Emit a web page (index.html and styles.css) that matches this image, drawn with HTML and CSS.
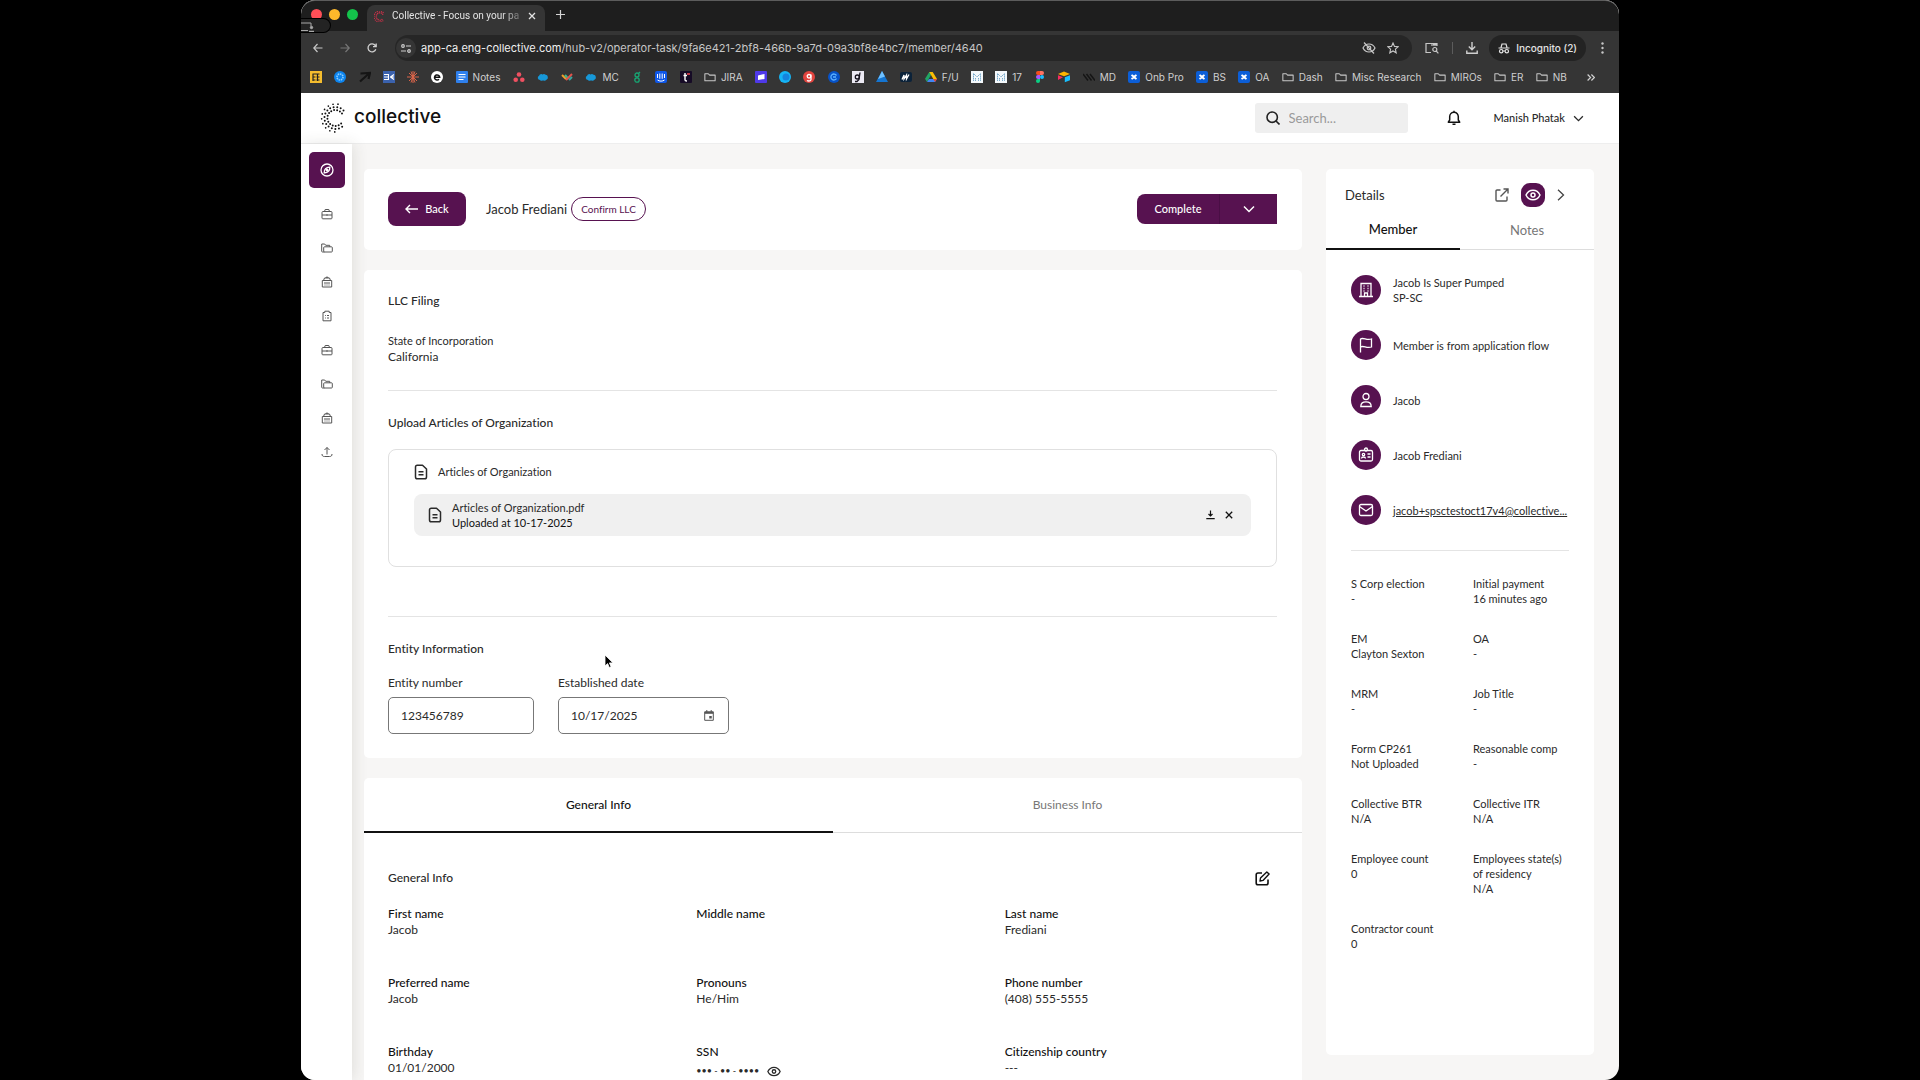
FILE: index.html
```html
<!DOCTYPE html>
<html lang="en">
<head>
  <meta charset="UTF-8" />
  <meta name="viewport" content="width=device-width, initial-scale=1.0"/>
  <title>Collective - Focus on your passion</title>
  <link rel="stylesheet" href="styles.css">
</head>
<body>
  <!-- shared icons -->
  <svg class="sprite" aria-hidden="true">
    <symbol id="i-folder" viewBox="0 0 14 12"><path d="M1 2.2h4l1.5 1.6H13v6.6H1z" fill="none" stroke="#c7c7c7" stroke-width="1.2" stroke-linejoin="round"/></symbol>
    <symbol id="i-cross" viewBox="0 0 12 12"><rect width="12" height="12" rx="2" fill="#0b5ed7"/><path d="M3.5 4c2 1.200 3 2.800 5 4M8.500 4c-2 1.200-3 2.800-5 4" stroke="#fff" stroke-width="2" fill="none"/></symbol>
    <symbol id="i-cloud" viewBox="0 0 14 12"><path d="M3.500 9.500a2.600 2.600 0 0 1-1-5A2.600 2.600 0 0 1 6.500 3a3 3 0 0 1 3.500.5 3 3 0 0 1 1 5.700 3 3 0 0 1-4 .6 2.500 2.500 0 0 1-3.500-.3z" fill="#1798d8"/></symbol>
    <symbol id="i-m" viewBox="0 0 12 12"><rect width="12" height="12" fill="#f4f8fb"/><path d="M2.500 10V2.500L6 6l3.500-3.500V10M4.500 10V7M7.500 10V7" stroke="#79aacb" stroke-width="1" stroke-dasharray="1.500 .5" fill="none"/></symbol>
    <symbol id="i-case" viewBox="0 0 12 12"><path d="M1 4.500A1 1 0 0 1 2 3.500h8a1 1 0 0 1 1 1V10a.8.8 0 0 1-.8.800H1.800A.8.8 0 0 1 1 10zM3.500 3.500 4.200 1.500h3.600l.7 2M1 7h10M6 6.200v1.600"/></symbol>
    <symbol id="i-folders" viewBox="0 0 12 12"><path d="M3.500 10H1.500a.8.8 0 0 1-.8-.8V2h3l1 1.300h4V4.800M3.500 10a.8.8 0 0 1-.8-.8V5.600a.8.8 0 0 1 .8-.8h7a.8.8 0 0 1 .8.800v3.600a.8.8 0 0 1-.8.800z"/></symbol>
    <symbol id="i-bank" viewBox="0 0 12 12"><path d="M1.300 4.500h9.400V11H1.300zM2.500 4.500 3.500 2h5l1 2.500M5 2v-.8h2V2M3 7h6M3.500 9h1M5.500 9h1M7.500 9h1"/></symbol>
    <symbol id="i-doc" viewBox="0 0 14 16"><path d="M1.500 3A1.800 1.800 0 0 1 3.300 1.200H8.500L12.500 5v8a1.800 1.800 0 0 1-1.800 1.800H3.300A1.800 1.800 0 0 1 1.500 13zM4.500 7.800h5M4.500 10.800h5" fill="none" stroke="currentColor" stroke-width="1.500" stroke-linejoin="round"/></symbol>
    <symbol id="i-eye" viewBox="0 0 16 12"><path d="M1 6c1.400-3 4-4.800 7-4.800S13.600 3 15 6c-1.400 3-4 4.800-7 4.800S2.400 9 1 6z" fill="none" stroke="currentColor" stroke-width="1.500" stroke-linejoin="round"/><circle cx="8" cy="6" r="2" fill="none" stroke="currentColor" stroke-width="1.500"/></symbol>
    <symbol id="i-down" viewBox="0 0 12 8"><path d="M1 1.500l5 5 5-5" fill="none" stroke="currentColor" stroke-width="1.500"/></symbol>
  </svg>

  <div class="window">
    <div class="tab-strip">
      <div class="lights"><i class="light red"></i><i class="light yellow"></i><i class="light green"></i></div>
      <div class="browser-tab">
        <svg width="11" height="11" viewBox="0 0 12 12" fill="none" stroke="#c93048" stroke-linecap="round"><path d="M9.500 3.500a4 4 0 1 0 0 5" stroke-width="1.700" stroke-dasharray="0 2"/><path d="M10 1.500a6 6 0 1 0 0 9" stroke-width="1.500" stroke-dasharray="0 2.200"/></svg>
        <span class="tab-title">Collective - Focus on your pa</span>
        <button class="plain" aria-label="Close tab"><svg width="8" height="8" viewBox="0 0 8 8"><path d="M1 1l6 6M7 1L1 7" stroke="#e3e3e3" stroke-width="1.300"/></svg></button>
      </div>
      <button class="plain" aria-label="New tab"><svg width="9" height="9" viewBox="0 0 9 9"><path d="M4.500 0v9M0 4.500h9" stroke="#d5d5d5" stroke-width="1.200"/></svg></button>
      <div class="share-pill"><svg width="14" height="10" viewBox="0 0 14 10" fill="none" stroke="#a9a9a9"><path d="M0 1h10v3M0 8.500h7"/><circle cx="10.500" cy="5.500" r="1.200" fill="#a9a9a9"/><path d="M8 9.500h5" stroke-width="1.500"/></svg></div>
    </div>

    <div class="toolbar">
      <div class="nav-buttons">
        <button class="plain" aria-label="Back"><svg width="10" height="10" viewBox="0 0 10 10" fill="none" stroke="#c7c7c7" stroke-width="1.200"><path d="M9.500 5h-9M4.500 1L.8 5l3.700 4"/></svg></button>
        <button class="plain" aria-label="Forward"><svg width="10" height="10" viewBox="0 0 10 10" fill="none" stroke="#777" stroke-width="1.200"><path d="M.5 5h9M5.500 1l3.700 4-3.700 4"/></svg></button>
        <button class="plain" aria-label="Reload"><svg width="10" height="10" viewBox="0 0 10 10" fill="none" stroke="#d0d0d0" stroke-width="1.300"><path d="M8.800 6.200A4 4 0 1 1 8.300 2.500L9 3.500M9.200.5v3.200H6"/></svg></button>
      </div>
      <div class="address">
        <span class="site-info"><svg width="10" height="9" viewBox="0 0 10 9" fill="none" stroke="#d0d0d0" stroke-width="1.200"><circle cx="2" cy="2" r="1.300"/><path d="M5 2h5M0 7h5"/><circle cx="8" cy="7" r="1.300"/></svg></span>
        <span class="url"><b>app-ca.eng-collective.com</b>/hub-v2/operator-task/9fa6e421-2bf8-466b-9a7d-09a3bf8e4bc7/member/4640</span>
        <svg width="14" height="12" viewBox="0 0 14 12" fill="none" stroke="#c7c7c7" stroke-width="1.200"><path d="M1 6c1.300-2.600 3.500-4 6-4s4.700 1.400 6 4c-1.300 2.600-3.500 4-6 4S2.300 8.600 1 6z"/><circle cx="7" cy="6" r="1.800"/><path d="M2 .5l10 11"/></svg>
        <svg width="12" height="12" viewBox="0 0 12 12" fill="none" stroke="#c7c7c7" stroke-width="1.100"><path d="M6 1l1.500 3.400 3.600.4-2.700 2.400.8 3.600L6 9l-3.200 1.800.8-3.600L.9 4.800l3.600-.4z"/></svg>
      </div>
      <div class="tools">
        <svg width="14" height="12" viewBox="0 0 14 12" fill="none" stroke="#c7c7c7" stroke-width="1.200"><path d="M6 10.500H1V1.500h11v2.500M7 4V1.500"/><path d="M8 2.500h4" stroke-width="2.400"/><circle cx="9.800" cy="7.500" r="2"/><path d="M11.200 9l2.200 2.300"/></svg>
        <i class="sep"></i>
        <svg width="12" height="12" viewBox="0 0 12 12" fill="none" stroke="#d0d0d0" stroke-width="1.400"><path d="M6 0v7.500M2.800 4.500L6 7.700l3.200-3.200M.8 8.500v2.800h10.400V8.500"/></svg>
      </div>
      <div class="incognito">
        <svg width="12" height="11" viewBox="0 0 12 11" fill="none" stroke="#e3e3e3" stroke-width="1.200"><path d="M.5 5h11M3 4.500L4 1h4l1 3.500"/><circle cx="3.200" cy="8.200" r="1.700"/><circle cx="8.800" cy="8.200" r="1.700"/><path d="M5 8h2"/></svg>
        Incognito (2)
      </div>
      <svg class="kebab" width="3" height="12" viewBox="0 0 3 12" fill="#c7c7c7"><circle cx="1.500" cy="1.500" r="1.200"/><circle cx="1.500" cy="6" r="1.200"/><circle cx="1.500" cy="10.500" r="1.200"/></svg>
    </div>

    <div class="bookmarks">
      <div class="bookmark-list">
        <span class="bookmark"><svg viewBox="0 0 12 12"><rect width="12" height="12" fill="#f5bd2e"/><path d="M2.500 3h7M3 6h2.500M3 9h2.500M7.500 2.500v7.500M3 3v7M6.500 6h3M6.500 9h3" stroke="#222" stroke-width="1.200"/></svg></span>
        <span class="bookmark"><svg viewBox="0 0 12 12"><circle cx="6" cy="6" r="6" fill="#0d84ee"/><circle cx="6" cy="6" r="3" fill="none" stroke="#8ed0ff" stroke-width="1.500" stroke-dasharray="1.500 .8"/></svg></span>
        <span class="bookmark"><svg viewBox="0 0 12 12"><path d="M1.500 2.500L11 2l-1.500 6M1 10.500l8.500-7.500" fill="none" stroke="#151515" stroke-width="2.200"/></svg></span>
        <span class="bookmark"><svg viewBox="0 0 12 12"><rect width="12" height="12" fill="#3b62ad"/><path d="M1 3.500h4.500v5H1M1 6h4M7 6h4M7.500 6L11 3.500M7.500 6L11 8.500" stroke="#fff" stroke-width="1.100" fill="none"/></svg></span>
        <span class="bookmark"><svg viewBox="0 0 12 12"><path d="M6 0v12M0 6h12M2 2l8 8M10 2l-8 8M4 .5l4 11M8 .5l-4 11" stroke="#d9644a"/></svg></span>
        <span class="bookmark"><svg viewBox="0 0 12 12"><circle cx="6" cy="6" r="6" fill="#fff"/><path d="M3.500 6.300h5.200A2.600 2.600 0 1 0 8 8.300" fill="none" stroke="#111" stroke-width="1.500"/></svg></span>
        <span class="bookmark"><svg viewBox="0 0 12 12"><rect width="12" height="12" rx="1" fill="#2f80ed"/><path d="M2.500 3.500h7M2.500 6h7M2.500 8.500h5" stroke="#fff" stroke-width="1.200"/></svg>Notes</span>
        <span class="bookmark"><svg viewBox="0 0 12 12" fill="#ef5061"><circle cx="6" cy="3.500" r="2.300"/><circle cx="2.700" cy="8.700" r="2.300"/><circle cx="9.300" cy="8.700" r="2.300"/></svg></span>
        <span class="bookmark"><svg><use href="#i-cloud"/></svg></span>
        <span class="bookmark"><svg viewBox="0 0 12 12" fill="none" stroke-width="2"><path d="M1 4l4 4" stroke="#f0a02c"/><path d="M4 4l3.500 4" stroke="#3fb68b"/><path d="M5 9l6-6" stroke="#e4534b"/><path d="M8 9l3-3" stroke="#37a5a0"/></svg></span>
        <span class="bookmark"><svg><use href="#i-cloud"/></svg>MC</span>
        <span class="bookmark"><svg viewBox="0 0 12 12" fill="none" stroke="#17a673" stroke-width="1.300"><circle cx="6" cy="4" r="2"/><circle cx="6" cy="9" r="2.200"/><path d="M7.500 2.500L9 1"/></svg></span>
        <span class="bookmark"><svg viewBox="0 0 12 12"><rect width="12" height="12" rx="2" fill="#0f57e8"/><path d="M2.500 3v4M4.800 2.500v5.300M7.200 2.500v5.300M9.500 3v4M2.500 9c2 1.500 5 1.500 7 0" stroke="#fff" fill="none"/></svg></span>
        <span class="bookmark"><svg viewBox="0 0 12 12"><rect width="12" height="12" rx="1" fill="#160b26"/><path d="M5 2v7q0 1 2 1M3.500 4.500H7" stroke="#fff" stroke-width="1.400" fill="none"/><path d="M7 3h3" stroke="#e8414e" stroke-width="1.600"/></svg></span>
        <span class="bookmark"><svg><use href="#i-folder"/></svg>JIRA</span>
        <span class="bookmark"><svg viewBox="0 0 12 12"><rect width="12" height="12" rx="1" fill="#4f39e8"/><path d="M3 4.500L9.500 3v5L3 9z" fill="#fff"/></svg></span>
        <span class="bookmark"><svg viewBox="0 0 12 12"><circle cx="6" cy="6" r="6" fill="#16b4f5"/><circle cx="7" cy="6" r="3.500" fill="#1583dd"/></svg></span>
        <span class="bookmark"><svg viewBox="0 0 12 12"><circle cx="6" cy="6" r="6" fill="#e2443f"/><path d="M8 3.500v5q0 1.500-2 1.500-1.200 0-2-.6" fill="none" stroke="#fff" stroke-width="1.300"/><circle cx="6" cy="5.300" r="1.800" fill="none" stroke="#fff" stroke-width="1.300"/></svg></span>
        <span class="bookmark"><svg viewBox="0 0 12 12"><circle cx="6" cy="6" r="6" fill="#0752c8"/><path d="M8.500 4.500A3 3 0 1 0 8.500 7.500M5 6h3" fill="none" stroke="#5cb2ff" stroke-width="1.300"/></svg></span>
        <span class="bookmark"><svg viewBox="0 0 12 12"><rect width="12" height="12" fill="#eceaf4"/><circle cx="5.300" cy="6" r="2" fill="none" stroke="#17141f" stroke-width="1.300"/><path d="M8 1.500L7 8.500 5 10.500H3" fill="none" stroke="#17141f" stroke-width="1.300"/></svg></span>
        <span class="bookmark"><svg viewBox="0 0 12 12"><path d="M6 0l6 11H0z" fill="#1575d1"/><path d="M6 0l3 5.500L2 8z" fill="#6fc1ff"/></svg></span>
        <span class="bookmark"><svg viewBox="0 0 12 12"><rect y="1" width="12" height="10" rx="2" fill="#0b2239"/><path d="M2 8.500L4 4v4l2.500-4v4L9 3.500" fill="none" stroke="#fff" stroke-width="1.300"/></svg></span>
        <span class="bookmark"><svg viewBox="0 0 12 12"><path d="M4.300 1h3.400L4 7.500 2 11 0 7.800z" fill="#21a464"/><path d="M4.300 1h3.400L12 8H8.300z" fill="#fbbc05"/><path d="M4 8h8l-2 3H2z" fill="#4285f4"/><path d="M8.300 8H12l-2 3z" fill="#ea4335"/></svg>F/U</span>
        <span class="bookmark"><svg><use href="#i-m"/></svg></span>
        <span class="bookmark"><svg><use href="#i-m"/></svg>17</span>
        <span class="bookmark"><svg viewBox="0 0 12 12"><path d="M6 0H4a2 2 0 0 0 0 4h2z" fill="#f24e1e"/><path d="M6 0h2a2 2 0 0 1 0 4H6z" fill="#ff7262"/><path d="M6 4H4a2 2 0 0 0 0 4h2z" fill="#a259ff"/><circle cx="8" cy="6" r="2" fill="#1abcfe"/><path d="M6 8H4a2 2 0 1 0 2 2z" fill="#0acf83"/></svg></span>
        <span class="bookmark"><svg viewBox="0 0 12 12"><path d="M0 3l6-2.500L12 3 6 5.300z" fill="#fcb400"/><path d="M6.800 6.200L12 4.300v5l-5.200 2z" fill="#18bfff"/><path d="M0 4.300l5 2-5 2.700z" fill="#f82b60"/></svg></span>
        <span class="bookmark"><svg viewBox="0 0 12 12"><path d="M0 3l5 6.500M3.500 3l5 6.500M7 3l5 6.500" stroke="#151515" stroke-width="1.500"/></svg>MD</span>
        <span class="bookmark"><svg><use href="#i-cross"/></svg>Onb Pro</span>
        <span class="bookmark"><svg><use href="#i-cross"/></svg>BS</span>
        <span class="bookmark"><svg><use href="#i-cross"/></svg>OA</span>
        <span class="bookmark"><svg><use href="#i-folder"/></svg>Dash</span>
        <span class="bookmark"><svg><use href="#i-folder"/></svg>Misc Research</span>
        <span class="bookmark"><svg><use href="#i-folder"/></svg>MIROs</span>
        <span class="bookmark"><svg><use href="#i-folder"/></svg>ER</span>
        <span class="bookmark"><svg><use href="#i-folder"/></svg>NB</span>
      </div>
      <svg width="8" height="7" viewBox="0 0 8 7" fill="none" stroke="#d0d0d0" stroke-width="1.200"><path d="M.6.500l3 3-3 3M4.400.5l3 3-3 3"/></svg>
    </div>

    <header class="app-header">
      <svg class="logo-mark" width="26" height="30" viewBox="0 0 26 30" fill="none" stroke="#111" stroke-linecap="round">
        <path d="M22 10.500a8 8 0 1 0 0 9" stroke-width="2" stroke-dasharray="0 3"/>
        <path d="M23.500 7.500a11 11 0 1 0 0 15" stroke-width="2" stroke-dasharray="0 3.600"/>
        <path d="M18 1.200a14 14 0 1 0 0 27.600" stroke-width="1.700" stroke-dasharray="0 5"/>
      </svg>
      <span class="logo-text">collective</span>
      <label class="search">
        <svg width="14" height="14" viewBox="0 0 14 14" fill="none" stroke="#222" stroke-width="1.600"><circle cx="6.200" cy="6.200" r="5.200"/><path d="M10 10l3.500 3.500"/></svg>
        <input type="text" placeholder="Search..." aria-label="Search">
      </label>
      <button class="plain bell" aria-label="Notifications"><svg width="14" height="16" viewBox="0 0 14 16" fill="none" stroke="#111" stroke-width="1.500" stroke-linejoin="round"><path d="M1.300 12.200h11.400L11.300 10V6.500a4.300 4.300 0 0 0-8.600 0V10zM7 2V.8M5.500 14.300h3" /></svg></button>
      <button class="plain user">Manish Phatak <svg width="11" height="7"><use href="#i-down"/></svg></button>
    </header>

    <div class="app-body">
      <nav class="sidebar">
        <a href="#" class="side-link active" aria-label="Tasks"><svg viewBox="0 0 14 14" fill="none" stroke="#fff" stroke-width="1.300"><circle cx="7" cy="7" r="6"/><path d="M9.800 4.200c.3 3-2 5.800-5.600 5.600-.3-3 2-5.800 5.600-5.600z"/><circle cx="7" cy="7" r=".8"/></svg></a>
        <a href="#" class="side-link" aria-label="Work"><svg><use href="#i-case"/></svg></a>
        <a href="#" class="side-link" aria-label="Files"><svg><use href="#i-folders"/></svg></a>
        <a href="#" class="side-link" aria-label="Bank"><svg><use href="#i-bank"/></svg></a>
        <a href="#" class="side-link" aria-label="Forms"><svg viewBox="0 0 12 12"><path d="M2 2.500h1.800V1.200h4.400v1.300H10v8.300H2zM4 5.500h.8M6 5.500h2M4 8h.8M6 8h2"/></svg></a>
        <a href="#" class="side-link" aria-label="Payroll"><svg><use href="#i-case"/></svg></a>
        <a href="#" class="side-link" aria-label="Archive"><svg><use href="#i-folders"/></svg></a>
        <a href="#" class="side-link" aria-label="Accounts"><svg><use href="#i-bank"/></svg></a>
        <a href="#" class="side-link" aria-label="Upload"><svg viewBox="0 0 12 12"><path d="M6 8.500V1.500M3.500 4L6 1.500 8.500 4M1 8c0 2 1 2.500 2.500 2.500h5C10 10.500 11 10 11 8"/></svg></a>
      </nav>

      <main class="content">
        <div class="main-column">
          <section class="card task-bar">
            <button class="btn back"><svg width="13" height="10" viewBox="0 0 13 10" fill="none" stroke="#fff" stroke-width="1.400"><path d="M13 5H1M5 1L1 5l4 4"/></svg>Back</button>
            <h1 class="member-name">Jacob Frediani</h1>
            <span class="chip">Confirm LLC</span>
            <div class="split-button">
              <button class="btn complete">Complete</button>
              <button class="btn more" aria-label="More actions"><svg width="12" height="8"><use href="#i-down"/></svg></button>
            </div>
          </section>

          <section class="card filing">
            <h2>LLC Filing</h2>
            <dl class="state">
              <dt>State of Incorporation</dt>
              <dd>California</dd>
            </dl>
            <hr>
            <h2>Upload Articles of Organization</h2>
            <div class="upload-box">
              <div class="upload-title"><svg width="14" height="16"><use href="#i-doc"/></svg>Articles of Organization</div>
              <div class="file-row">
                <svg width="14" height="16"><use href="#i-doc"/></svg>
                <div class="file-text">
                  <div>Articles of Organization.pdf</div>
                  <div class="file-date">Uploaded at 10-17-2025</div>
                </div>
                <button class="plain" aria-label="Download file"><svg width="9" height="10" viewBox="0 0 9 10" fill="none" stroke="#111" stroke-width="1.200"><path d="M4.500.5V6M2.500 4l2 2 2-2M.3 8.700h8.400"/></svg></button>
                <button class="plain" aria-label="Remove file"><svg width="8" height="8" viewBox="0 0 8 8" fill="none" stroke="#111" stroke-width="1.300"><path d="M.8.800l6.400 6.400M7.200.8L.8 7.200"/></svg></button>
              </div>
            </div>
            <hr>
            <h2>Entity Information</h2>
            <div class="fields">
              <div class="field number">
                <label for="entity-number">Entity number</label>
                <input type="text" id="entity-number" value="123456789">
              </div>
              <div class="field date">
                <label for="established-date">Established date</label>
                <div class="date-box">
                  <input type="text" id="established-date" value="10/17/2025">
                  <button class="plain" aria-label="Open calendar"><svg width="10" height="11" viewBox="0 0 10 11" fill="none" stroke="#555"><path d="M.7 1.800h8.600v8.500H.7zM2.800 0v2M7.200 0v2"/><path d="M.7 2.800h8.600" stroke-width="2"/><path d="M6.500 6v2.500" stroke-width="2.500"/></svg></button>
                </div>
              </div>
            </div>
          </section>

          <section class="card info">
            <div class="tabs">
              <button class="tab active">General Info</button>
              <button class="tab">Business Info</button>
            </div>
            <div class="info-body">
              <div class="info-head">
                <h2>General Info</h2>
                <button class="plain" aria-label="Edit"><svg width="15" height="15" viewBox="0 0 15 15" fill="none" stroke="#111" stroke-width="1.600" stroke-linejoin="round"><path d="M7 2H3a1.800 1.800 0 0 0-1.800 1.800V12A1.800 1.800 0 0 0 3 13.800h8.200A1.800 1.800 0 0 0 13 12V8.500"/><path d="M5 10l.5-3L11.800.9l2.300 2.200L8 9.400z" stroke-width="1.400"/></svg></button>
              </div>
              <dl class="info-grid">
                <div><dt>First name</dt><dd>Jacob</dd></div>
                <div><dt>Middle name</dt><dd></dd></div>
                <div><dt>Last name</dt><dd>Frediani</dd></div>
                <div><dt>Preferred name</dt><dd>Jacob</dd></div>
                <div><dt>Pronouns</dt><dd>He/Him</dd></div>
                <div><dt>Phone number</dt><dd>(408) 555-5555</dd></div>
                <div><dt>Birthday</dt><dd>01/01/2000</dd></div>
                <div><dt>SSN</dt><dd class="ssn">••• - •• - •••• <button class="plain" aria-label="Show SSN"><svg width="14" height="11"><use href="#i-eye"/></svg></button></dd></div>
                <div><dt>Citizenship country</dt><dd>---</dd></div>
              </dl>
            </div>
          </section>
        </div>

        <aside class="card details">
          <div class="details-head">
            <h2>Details</h2>
            <button class="plain" aria-label="Open in new tab"><svg width="14" height="14" viewBox="0 0 14 14" fill="none" stroke="#555" stroke-width="1.400"><path d="M5.500 2H2a1 1 0 0 0-1 1v9a1 1 0 0 0 1 1h9a1 1 0 0 0 1-1V8.500M8.500 1H13v4.500M13 1L5.500 8.500"/></svg></button>
            <button class="eye-button" aria-label="Show details"><svg width="16" height="12"><use href="#i-eye"/></svg></button>
            <button class="plain" aria-label="Collapse"><svg width="8" height="12" viewBox="0 0 8 12" fill="none" stroke="#444" stroke-width="1.300"><path d="M1 .8L6.500 6 1 11.200"/></svg></button>
          </div>
          <div class="tabs small">
            <button class="tab active">Member</button>
            <button class="tab">Notes</button>
          </div>
          <div class="details-body">
            <ul class="contact">
              <li><span class="dot"><svg viewBox="0 0 16 16"><path d="M3 14.500V1.500h10v13M1 14.500h14M6.500 14.500V11h3v3.500M5.500 4h1M9.500 4h1M5.500 6.500h1M9.500 6.500h1M5.500 9h1M9.500 9h1"/></svg></span><div>Jacob Is Super Pumped<br>SP-SC</div></li>
              <li><span class="dot"><svg viewBox="0 0 16 16"><path d="M2.500 15.500V2c3-2 6 1.800 11 0v8c-5 1.800-8-2-11 0"/></svg></span><div>Member is from application flow</div></li>
              <li><span class="dot"><svg viewBox="0 0 16 16"><circle cx="8" cy="4.500" r="3"/><path d="M2.800 14.500c0-3.500 2-4.700 5.200-4.700s5.200 1.200 5.200 4.700z"/></svg></span><div>Jacob</div></li>
              <li><span class="dot"><svg viewBox="0 0 16 16"><rect x="1.500" y="3.500" width="13" height="10.500" rx="1.500"/><circle cx="8" cy="2.500" r="1.500"/><circle cx="5.500" cy="7.500" r="1.200"/><path d="M3.500 11.500c0-2 4-2 4 0M9.500 7h3M9.500 10h3"/></svg></span><div>Jacob Frediani</div></li>
              <li><span class="dot"><svg viewBox="0 0 16 16"><rect x="1.500" y="2.500" width="13" height="11" rx="1.500"/><path d="M1.500 4.500L8 9l6.500-4.500"/></svg></span><a class="email" href="#">jacob+spsctestoct17v4@collective...</a></li>
            </ul>
            <dl class="facts">
              <div><dt>S Corp election</dt><dd>-</dd></div>
              <div><dt>Initial payment</dt><dd>16 minutes ago</dd></div>
              <div><dt>EM</dt><dd>Clayton Sexton</dd></div>
              <div><dt>OA</dt><dd>-</dd></div>
              <div><dt>MRM</dt><dd>-</dd></div>
              <div><dt>Job Title</dt><dd>-</dd></div>
              <div><dt>Form CP261</dt><dd>Not Uploaded</dd></div>
              <div><dt>Reasonable comp</dt><dd>-</dd></div>
              <div><dt>Collective BTR</dt><dd>N/A</dd></div>
              <div><dt>Collective ITR</dt><dd>N/A</dd></div>
              <div><dt>Employee count</dt><dd>0</dd></div>
              <div><dt>Employees state(s) of residency</dt><dd>N/A</dd></div>
              <div><dt>Contractor count</dt><dd>0</dd></div>
            </dl>
          </div>
        </aside>
      </main>
    </div>
  </div>

  <svg class="cursor" width="10" height="15" viewBox="0 0 10 15"><path d="M1 1v11l2.600-2.400L5.300 13.500l1.800-.8-1.700-3.800H9z" fill="#000" stroke="#fff" stroke-width=".8"/></svg>
</body>
</html>
```
FILE: styles.css
```css
* {
  margin: 0;
  padding: 0;
  box-sizing: border-box;
}

body {
  height: 100vh;
  padding: 0 301px;
  background: #000;
  color: #2a2a2a;
  font-family: Lato, "Liberation Sans", sans-serif;
  font-size: 12px;
  line-height: 16px;
  font-variant-ligatures: none;
  overflow: hidden;
}

button,
input {
  font: inherit;
  font-variant-ligatures: none;
  color: inherit;
}

button {
  border: none;
  cursor: pointer;
}

ul {
  list-style: none;
}

svg {
  display: block;
  flex-shrink: 0;
}

.sprite {
  position: absolute;
  width: 0;
  height: 0;
}

.plain {
  display: flex;
  align-items: center;
  background: none;
}

.window {
  height: 100%;
  display: flex;
  flex-direction: column;
  border-radius: 14px;
  background: #f7f6f5;
  overflow: hidden;
}

/* browser chrome */

.tab-strip,
.toolbar,
.bookmarks {
  display: flex;
  align-items: center;
  font-family: Inter, "Liberation Sans", sans-serif;
  font-size: 10px;
  color: #e3e3e3;
}

.tab-strip {
  position: relative;
  height: 31px;
  padding: 0 0 3px 10px;
  background: #1e1e1e;
  border-top: 1px solid #5c5c5c;
  border-radius: 14px 14px 0 0;
}

.lights {
  display: flex;
  gap: 7px;
  margin-right: 9px;
}

.light {
  width: 11px;
  height: 11px;
  border-radius: 50%;
}

.red { background: #ff4f57; }
.yellow { background: #fdb82b; }
.green { background: #14c34b; }

.browser-tab {
  width: 178px;
  height: 26px;
  align-self: flex-end;
  display: flex;
  align-items: center;
  gap: 7px;
  margin: 0 11px -3px 0;
  padding: 0 9px 4px 7px;
  background: #353535;
  border-radius: 8px 8px 0 0;
}

.tab-title {
  flex: 1;
  overflow: hidden;
  white-space: nowrap;
  font-family: Roboto, "Liberation Sans", sans-serif;
  -webkit-mask-image: linear-gradient(to right, #000 85%, transparent 105%);
  mask-image: linear-gradient(to right, #000 85%, transparent 105%);
}

.share-pill {
  position: absolute;
  left: 0;
  top: 17px;
  width: 30px;
  height: 15px;
  padding: 3px 0;
  background: #232323;
  border: 1px solid #000;
  border-left: none;
  border-radius: 0 8px 8px 0;
}

.toolbar {
  height: 34px;
  padding: 0 15px 0 12px;
  background: #353535;
}

.nav-buttons {
  display: flex;
  gap: 17px;
  margin-right: 18px;
}

.address {
  flex: 1;
  height: 26px;
  display: flex;
  align-items: center;
  gap: 11px;
  padding: 0 13px 0 1px;
  background: #262626;
  border-radius: 13px;
}

.site-info {
  width: 20px;
  height: 20px;
  display: flex;
  align-items: center;
  justify-content: center;
  border-radius: 50%;
  background: #353535;
}

.url {
  flex: 1;
  margin-left: -6px;
  font-size: 11px;
  color: #c7c7c7;
}

.url b {
  font-weight: 400;
  color: #f0f0f0;
}

.tools {
  display: flex;
  align-items: center;
  gap: 13px;
  margin: 0 11px 0 13px;
}

.sep {
  width: 1px;
  height: 12px;
  background: #5c5c5c;
}

.incognito {
  height: 26px;
  display: flex;
  align-items: center;
  gap: 6px;
  margin-right: 15px;
  padding: 0 9px;
  background: #232323;
  border-radius: 13px;
  font-weight: 500;
}

.bookmarks {
  height: 28px;
  padding: 0 24px 4px 9px;
  gap: 20px;
  background: #353535;
  color: #d0d0d0;
}

.bookmark-list {
  flex: 1;
  display: flex;
  justify-content: space-between;
}

.bookmark {
  display: flex;
  align-items: center;
  gap: 5px;
}

.bookmark svg {
  width: 12px;
  height: 12px;
}

/* app */

.app-header {
  height: 51px;
  display: flex;
  align-items: center;
  padding: 0 35px 0 19px;
  background: #fff;
  border-bottom: 1px solid #eee;
}

.logo-text {
  flex: 1;
  margin: 0 0 2px 8px;
  font-family: Inter, "Liberation Sans", sans-serif;
  font-size: 19px;
  font-weight: 500;
  color: #111;
}

.search {
  width: 153px;
  height: 30px;
  display: flex;
  align-items: center;
  gap: 9px;
  padding: 0 11px;
  background: #efefef;
  border-radius: 3px;
  font-size: 13px;
}

.search input {
  min-width: 0;
  flex: 1;
  border: none;
  background: none;
}

.search input::placeholder {
  color: #9a9a9a;
}

.bell {
  margin: 0 33px 0 39px;
}

.user {
  gap: 8px;
  font-size: 11px;
  font-weight: 500;
}

.app-body {
  flex: 1;
  min-height: 0;
  display: flex;
}

.sidebar {
  width: 51px;
  display: flex;
  flex-direction: column;
  align-items: center;
  gap: 12px;
  padding-top: 8px;
  background: #fff;
  box-shadow: 2px 0 14px rgba(60, 60, 40, 0.12);
}

.side-link {
  height: 22px;
  display: flex;
  align-items: center;
}

.side-link svg {
  width: 12px;
  height: 12px;
  fill: none;
  stroke: #555;
}

.side-link.active {
  width: 36px;
  height: 36px;
  justify-content: center;
  margin-bottom: 3px;
  background: #571250;
  border-radius: 5px;
}

.side-link.active svg {
  width: 14px;
  height: 14px;
  stroke: #fff;
}

.content {
  flex: 1;
  min-width: 0;
  display: flex;
  gap: 24px;
  padding: 25px 25px 25px 12px;
}

.card {
  background: #fff;
  border-radius: 5px;
}

.main-column {
  flex: 1;
  min-width: 0;
  display: flex;
  flex-direction: column;
  gap: 20px;
}

.main-column .card {
  flex-shrink: 0;
}

h1,
h2 {
  font-size: 12px;
  font-weight: 500;
}

hr {
  border: none;
  border-top: 1px solid #e4e4e4;
}

.task-bar {
  height: 81px;
  display: flex;
  align-items: center;
  padding: 0 25px 2px 24px;
}

.btn {
  display: flex;
  align-items: center;
  justify-content: center;
  background: #571250;
  color: #fff;
  font-size: 11px;
  font-weight: 500;
}

.back {
  width: 78px;
  height: 34px;
  gap: 7px;
  border-radius: 8px;
}

.member-name {
  margin: 0 4px 0 20px;
  font-size: 13px;
  font-weight: 400;
}

.chip {
  height: 24px;
  padding: 3px 9px;
  border: 1px solid #571250;
  border-radius: 12px;
  color: #571250;
  font-size: 10px;
}

.split-button {
  display: flex;
  margin-left: auto;
}

.complete {
  width: 83px;
  height: 30px;
  border-right: 1px solid #4a0e45;
  border-radius: 8px 0 0 8px;
}

.more {
  width: 57px;
}

.filing {
  padding: 23px 25px 24px 24px;
}

.state {
  margin: 24px 0 25px;
}

.state dt {
  font-size: 11px;
}

.filing hr {
  margin-bottom: 24px;
}

.upload-box {
  margin: 18px 0 49px;
  padding: 14px 25px 30px;
  border: 1px solid #e0e0e0;
  border-radius: 8px;
  font-size: 11px;
}

.upload-title {
  display: flex;
  align-items: center;
  gap: 10px;
  margin-bottom: 14px;
}

.file-row {
  display: flex;
  align-items: center;
  gap: 10px;
  padding: 6px 18px 6px 14px;
  background: #f0f0f0;
  border-radius: 8px;
  line-height: 15px;
}

.file-text {
  flex: 1;
}

.file-date {
  color: #111;
}

.fields {
  display: flex;
  gap: 24px;
  margin-top: 18px;
}

.field {
  display: flex;
  flex-direction: column;
  gap: 6px;
}

.number {
  width: 146px;
}

.date {
  width: 171px;
}

.number input,
.date-box {
  height: 37px;
  padding: 0 12px;
  border: 1px solid #777;
  border-radius: 5px;
  background: #fff;
}

.date-box {
  display: flex;
  align-items: center;
  padding-right: 14px;
}

.date-box input {
  flex: 1;
  min-width: 0;
  border: none;
}

.tabs {
  display: flex;
}

.tab {
  flex: 1;
  height: 55px;
  background: none;
  border-bottom: 1px solid #ddd;
  color: #777;
}

.tab.active {
  border-bottom: 2px solid #111;
  color: #111;
  font-weight: 500;
}

.info-body {
  padding: 37px 25px 24px 24px;
}

.info-head {
  display: flex;
  align-items: center;
  justify-content: space-between;
  padding-right: 7px;
  margin-bottom: 20px;
}

.info-grid {
  display: grid;
  grid-template-columns: repeat(3, 1fr);
  gap: 37px 36px;
}

.info-grid dt {
  color: #111;
  font-weight: 500;
}

.ssn {
  display: flex;
  align-items: center;
  gap: 8px;
  padding-top: 3px;
  font-size: 9px;
}

.details {
  width: 268px;
}

.details-head {
  display: flex;
  align-items: center;
  gap: 12px;
  padding: 14px 29px 0 19px;
}

.details-head h2 {
  flex: 1;
  font-size: 13px;
  font-weight: 400;
}

.eye-button {
  width: 24px;
  height: 24px;
  display: flex;
  align-items: center;
  justify-content: center;
  border-radius: 9px;
  background: #571250;
  color: #fff;
}

.tabs.small .tab {
  height: 43px;
  padding-top: 3px;
  font-size: 13px;
}

.details-body {
  padding: 25px;
  font-size: 11px;
  line-height: 15px;
}

.contact {
  display: flex;
  flex-direction: column;
  gap: 25px;
  padding-bottom: 25px;
  border-bottom: 1px solid #e4e4e4;
}

.contact li {
  display: flex;
  align-items: center;
  gap: 12px;
}

.dot {
  width: 30px;
  height: 30px;
  flex-shrink: 0;
  display: flex;
  align-items: center;
  justify-content: center;
  border-radius: 50%;
  background: #571250;
}

.dot svg {
  width: 16px;
  height: 16px;
  fill: none;
  stroke: #fff;
  stroke-width: 1.300;
}

.email {
  color: inherit;
  white-space: nowrap;
}

.facts {
  display: grid;
  grid-template-columns: 98px 96px;
  gap: 25px 24px;
  padding-top: 25px;
}

.cursor {
  position: absolute;
  left: 604px;
  top: 654px;
}
```
